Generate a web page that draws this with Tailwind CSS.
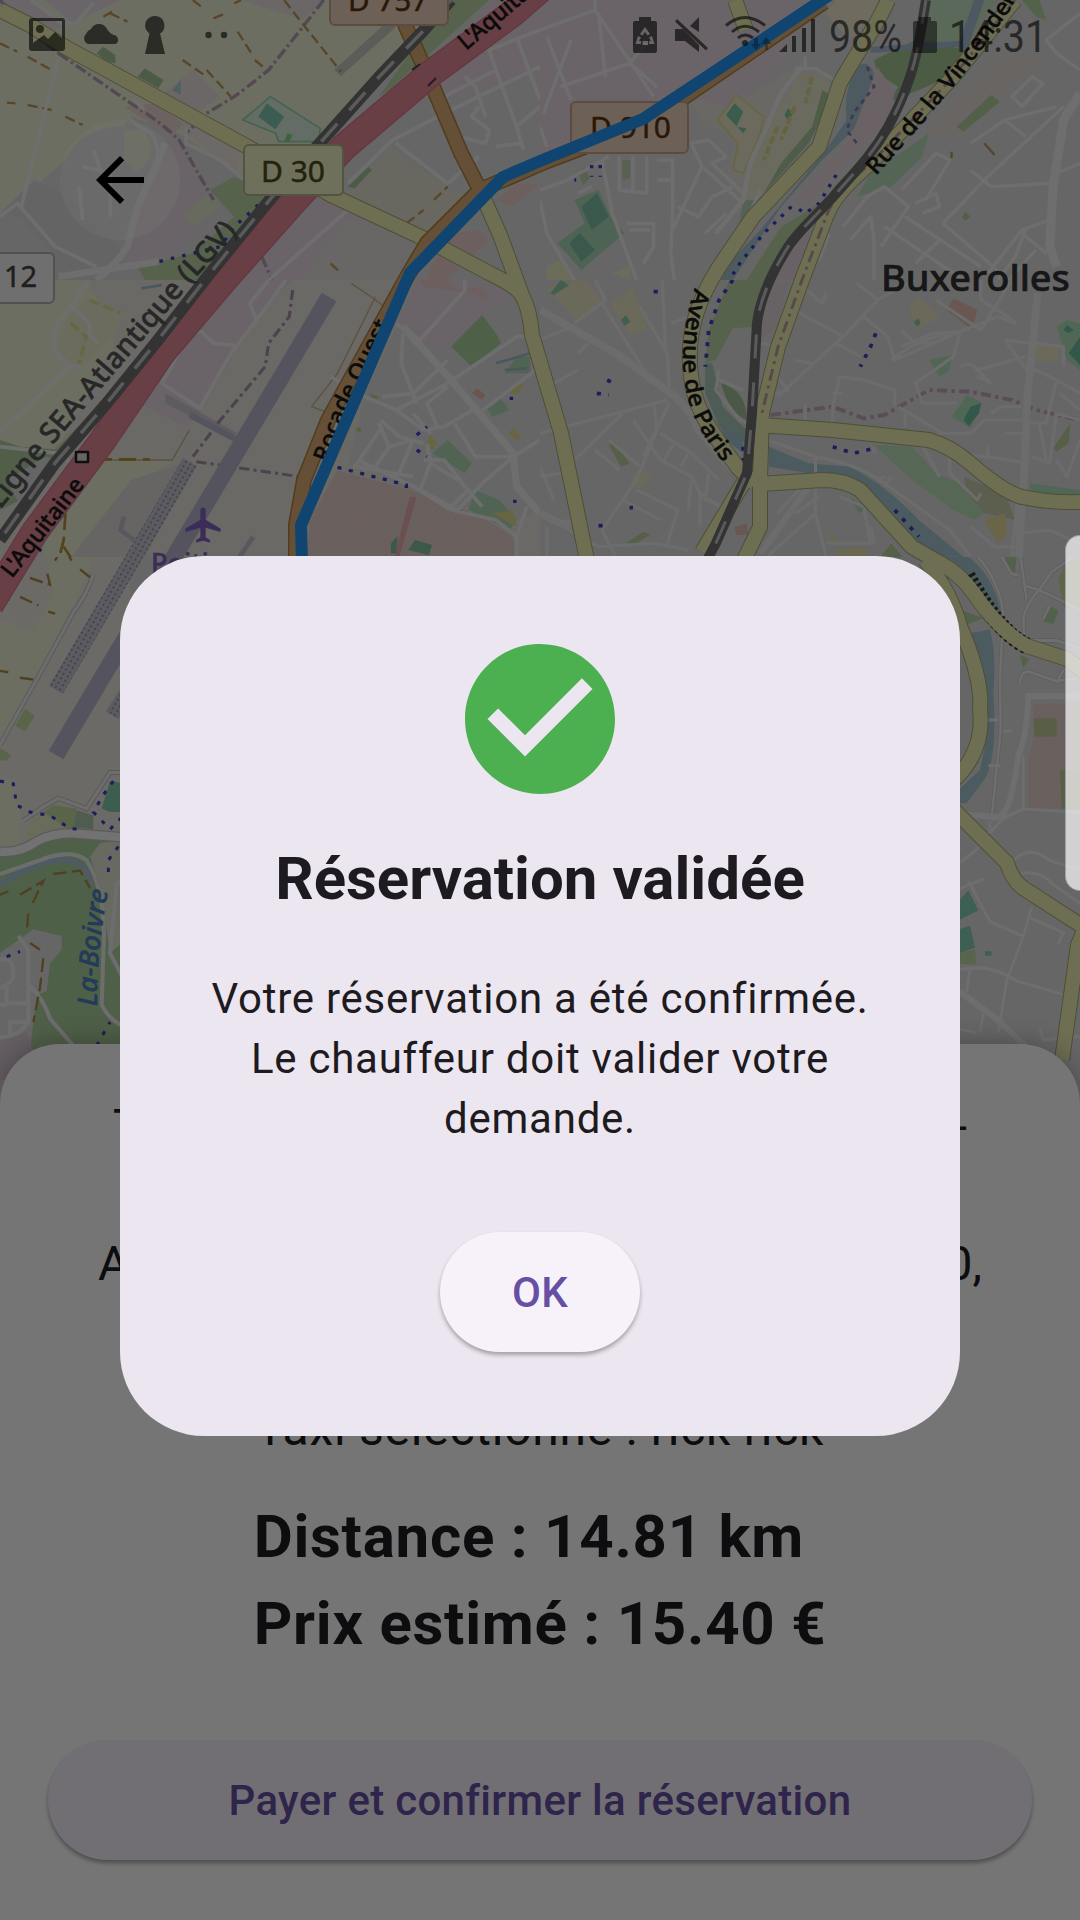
<!DOCTYPE html>
<html lang="fr">
<head>
<meta charset="utf-8">
<title>Réservation</title>
<script src="https://cdn.jsdelivr.net/npm/@tailwindcss/browser@4"></script>
</head>
<body class="bg-white font-['Roboto',sans-serif]">
<main class="relative h-[1920px] w-[1080px] overflow-hidden bg-white">

<!-- Map -->
<svg class="absolute left-0 top-0" width="1080" height="1120" viewBox="0 0 1080 1120" font-family="'Noto Sans',sans-serif">
<defs>
<pattern id="hatch" width="14" height="14" patternUnits="userSpaceOnUse" patternTransform="rotate(40)"><rect width="14" height="14" fill="#e6d3ce"/><path d="M0 0V14" stroke="#dfc0ba" stroke-width="2"/></pattern>
<pattern id="dots" width="5" height="5" patternUnits="userSpaceOnUse" patternTransform="rotate(30)"><rect width="5" height="5" fill="#c8c8d2"/><circle cx="2" cy="2" r="1.2" fill="#9494b0"/></pattern>
<path id="p-lgv" d="M0 510L57 440L192 282L247 222"/>
<path id="p-a1" d="M12 579L88 481"/>
<path id="p-a2" d="M466 51L560 -29"/>
<path id="p-roc" d="M328 463L347 410L407 290"/>
<path id="p-av" d="M695 288C681 330 680 370 688 398C694 424 710 446 728 468"/>
<path id="p-vin" d="M876 176L921 125L964 74L1010 10L1032 -33"/>
<path id="p-boi" d="M97 1006C97 970 100 930 109 888"/>
<path id="r-lgv" d="M451 0L424 30L379 77L320 143L272 197L207 277L158 340L107 403L55 463L0 540"/>
<path id="r-east" d="M926 0L921 30C915 65 908 90 888 127C872 155 855 172 833 197C810 222 798 232 788 247C772 272 760 300 757 323L752 413L747 473L716 543L706 562"/>
<path id="yellow" d="M0 10L30 25L65 47L193 117L248 147L331 195L427 240L489 273Q516 286 522 295Q530 310 532 335L561 433L587 560M480 190L500 235L522 295M735 0L746 30M888 0C875 30 858 50 840 83L819 147L753 217L719 267C698 300 688 330 690 365C692 410 712 432 738 468L755 484M1015 0L953 77L871 163C845 185 832 200 826 217L802 280L778 347L762 413L760 480V527L743 562M760 425L833 430L929 440Q950 446 970 463Q1003 492 1022 497Q1050 503 1080 502M760 484L822 480Q845 480 860 490L912 547L940 563Q960 574 973 592Q1000 632 1027 646L1067 659L1084 672M925 560Q950 590 960 626Q983 680 980 710Q985 750 954 780M944 800L1007 863Q1012 880 1023 888L1085 928L1078 945L1062 1060M702 552L744 482"/>
</defs>
<rect width="1080" height="1120" fill="#e0dfdf"/>

<!-- south-west -->
<svg x="0" y="540" width="130" height="540" viewBox="0 0 390 1568" preserveAspectRatio="none">
<rect width="390" height="1568" fill="#e9e6de"/>
<path d="M130 0H300L240 150L0 600V230L100 270L160 150Z" fill="#eef0d5"/>
<path d="M0 690L40 700L60 800L60 900H0Z" fill="#eef0d5"/><path d="M80 830L170 760L280 800L250 860L80 890Z" fill="#e4ebc4"/>
<path d="M45 540L75 490L105 510L75 555ZM0 605L35 625L20 640H0ZM160 770L230 780L220 850L190 830L130 790Z" fill="#c5dba0"/>
<path d="M230 785L280 800V840L220 835Z" fill="#aec8ae"/>
<path d="M0 910L200 860L390 880V1568H0V1200L60 1140V1000L0 980Z" fill="#add19e"/>
<path d="M0 980L60 1000V1140L0 1200Z" fill="#add19e"/>
<path d="M0 1200L100 1130L185 1150V1190L150 1230L140 1310L110 1320L100 1400L80 1568H0Z" fill="#e0dfdf"/>
<path d="M300 880L390 870V1150L330 1200L300 1000L270 920Z" fill="#e2e5d2"/>
<path d="M0 1450L80 1430L100 1480L110 1568H0Z" fill="#dccdd6"/>
<path d="M305 780L330 700L390 710V790L330 790Z" fill="#88cbb0"/>
<path d="M0 1000Q130 920 200 930Q260 935 275 1000" stroke="#aac6d8" stroke-width="16" fill="none"/>
<path d="M0 595L130 370L220 210Q260 160 280 100M70 815L130 775L175 750L260 780L330 675H390" stroke="#c4c4c4" stroke-width="15" fill="none"/>
<path d="M0 595L130 370L220 210Q260 160 280 100M70 815L130 775L175 750L260 780L330 675H390" stroke="#eee" stroke-width="9" fill="none"/>
<path d="M0 905Q60 910 110 875Q160 850 220 852L390 865" stroke="#c4c4c4" stroke-width="31" fill="none"/>
<path d="M0 905Q60 910 110 875Q160 850 220 852L390 865" stroke="#f8f8f8" stroke-width="24" fill="none"/>
<path d="M0 970L150 920Q220 900 260 930Q320 1020 310 1200L305 1350Q330 1400 390 1420M55 1150L85 1190V1400Q60 1440 0 1445M0 1220Q40 1200 40 1270Q20 1300 0 1300M20 1290V1345H85M0 1350H20M30 1440V1400H85M85 1290Q130 1330 150 1390L230 1480M390 970L350 1000L330 1200L390 1310" stroke="#eee" stroke-width="12" fill="none"/>
<path d="M0 700L40 708L50 770L90 790L150 800L210 838L240 840M340 700L310 740L280 790L330 840L380 790M355 890L325 930V970M290 1468L330 1400M20 1210L60 1195" stroke="#4040c8" stroke-width="9" stroke-dasharray="12 24" fill="none"/>
<path d="M165 60L190 20L215 60M90 110L150 130L140 90M0 175L30 172M60 165L115 190M145 208L165 214M0 380L25 384M60 400L100 405M240 85L270 108M60 1030L130 990L95 1060M0 1030L25 1020M85 1085L80 1140M90 1170L120 1190M130 1215L120 1300L100 1400M160 970L240 960L270 1010" stroke="#b08a48" stroke-width="7" stroke-dasharray="40 16" fill="none"/>
</svg>

<!-- south-east -->
<svg x="940" y="500" width="140" height="580" viewBox="0 0 420 1568" preserveAspectRatio="none">
<rect width="420" height="1568" fill="#e0dfdf"/>
<path d="M0 0H90L130 60L70 50L0 20Z" fill="#c0e4c4"/>
<path d="M130 60L200 80V110L170 125Z" fill="#e8e0a8"/><path d="M190 130L230 150L225 195L205 190ZM45 290L130 320L70 340ZM240 420L268 430L250 455ZM310 330L330 285L355 300L340 335Z" fill="#b4d3a0"/>
<path d="M0 100L80 150Q160 200 185 310L170 340L100 240L0 150ZM90 360L150 350Q170 420 160 520Q175 700 130 760L80 820H60V780L120 730L140 640V560Z" fill="#a4c6d0"/>
<path d="M280 550H420V835H265V700L280 650Z" fill="url(#hatch)"/><path d="M280 590H350V640H285ZM360 730H420V835H365Z" fill="#c3cc9c"/>
<path d="M355 210L385 160H420V290H370Z" fill="#cddd9a"/>
<path d="M60 1080L85 1055L115 1110L60 1135ZM60 1160L90 1150L105 1210L60 1225ZM135 1220H155V1232H135Z" fill="#88d0b5"/>
<path d="M60 1225L105 1215L110 1255H60Z" fill="#c0dca8"/>
<g fill="none" stroke="#c6c6c6" stroke-width="12"><path d="M0 75L90 130Q180 210 190 310L180 480L182 620L155 860M90 60L170 130L215 200L235 202M235 0L215 130M170 128H235M250 0L238 130L260 270M250 230Q330 250 420 300M240 85H330L420 125M300 240L335 195L420 140M300 240Q250 290 250 330L255 390M250 380H350L420 400M240 500Q240 460 270 465L350 490L420 480M350 495L370 460M310 320L330 285"/></g>
<g fill="none" stroke="#efefef" stroke-width="8"><path d="M0 75L90 130Q180 210 190 310L180 480L182 620L155 860M90 60L170 130L215 200L235 202M235 0L215 130M170 128H235M250 0L238 130L260 270M250 230Q330 250 420 300M240 85H330L420 125M300 240L335 195L420 140M300 240Q250 290 250 330L255 390M250 380H350L420 400M240 500Q240 460 270 465L350 490L420 480M350 495L370 460M310 320L330 285M120 595H175M145 718H180M190 625H215M250 690V835L420 845M250 835L190 860L150 900M60 980L110 945L150 895V870M60 1050L130 1025M85 1030L150 1140L250 1180M220 975Q270 930 330 975L420 1000M245 1010Q300 1000 340 1040L420 1090M275 1100L250 1180L200 1300L175 1440M270 1130L370 1170L355 1200M60 1270Q150 1250 230 1300L380 1340M90 1270L80 1330M120 1440L130 1390M60 1430L110 1440M300 1430L310 1460L420 1450"/>
<path d="M60 850L150 855Q190 870 210 810Q225 760 235 690Q260 640 265 530H420M60 1330L180 1410L260 1480" stroke-width="17"/></g>
</svg>

<!-- north-west -->
<svg x="0" y="0" width="540" height="280" viewBox="0 0 1568 840" preserveAspectRatio="none">
<rect width="1568" height="840" fill="#e0dfdf"/>
<path d="M0 0H350L640 290L920 420L800 590L520 400L330 330L170 180L80 560L0 640Z" fill="#eef0d5"/>
<path d="M330 0H960L1200 60L1310 0L930 430L700 430L540 330L170 130Z" fill="#eef0d5"/>
<path d="M170 170L390 330L360 380Q230 380 190 480L100 560L0 640V130Z" fill="#eef0d5"/>
<path d="M0 0H90L180 80L120 110L0 20ZM210 70L350 0H130Z" fill="#e6dce4"/>
<path d="M700 0H940L880 60ZM450 300L560 210L640 290L570 340Z" fill="#e9e0e0"/>
<path d="M430 330L560 340L700 430L690 520L540 400Z" fill="#ebe4de"/>
<path d="M360 320L450 310L530 370L500 410Z" fill="#ecd5cf"/>
<path d="M520 410L620 620L560 700L450 800H320L420 560Z" fill="#e8dbe4"/>
<path d="M530 640L610 580L640 620L560 680Z" fill="#e2e5d0"/>
<path d="M0 640L100 540L200 590L360 760L280 840H160L150 760L60 650Z" fill="#dadada"/>
<path d="M610 570L680 530L800 590L600 840H420L400 800L560 760L680 650Z" fill="#bcd5a4"/>
<path d="M1300 0H1420L1130 270L1100 290Z" fill="#bcd5a4"/>
<path d="M1430 0H1568V220L1290 300L1250 230Z" fill="#e8dbe4"/>
<path d="M1000 600L1130 580L1200 680L1240 720L1100 840H690L860 600Z" fill="#e8dbe4"/>
<path d="M1010 660L1200 700L1230 740L1170 840H870Z" fill="#e5e1dc"/>
<path d="M1000 580L1130 450L1290 550L1350 590L1230 700Z" fill="#e2e3d2"/>
<path d="M705 360L785 290L930 385L925 425H810L800 400Z" fill="#d8eedc" stroke="#95d8a5" stroke-width="5"/>
<path d="M750 350L775 310L825 350L800 388Z" fill="#80c8b0"/><path d="M825 425L835 400L850 405L840 425Z" fill="#7ddb8a"/>
<path d="M280 160L300 140L335 165V190L310 185ZM400 230L420 205L475 240L460 265ZM1010 560L1070 500L1080 510L1030 565Z" fill="#a6c79a"/>
<path d="M500 270L525 240V285Z" fill="#b4cfd4"/>
<path d="M1440 600L1500 550H1568L1490 620ZM1250 800L1310 700L1390 690L1420 720L1300 840H1240Z" fill="#edd0ca"/>
<path d="M360 390H420L440 440L430 480L400 520L360 480Z" fill="#e8ebcf"/>
<path d="M970 210L1130 60L1150 80L990 228Z" fill="#c8c8c0"/>
<path d="M940 0L880 80L780 210Q720 260 680 290L600 340L540 400M170 160L380 310Q460 360 520 420L620 600M0 0L60 70L170 160M760 770L790 840" stroke="#b79fb5" stroke-width="10" stroke-dasharray="34 10 8 10" fill="none"/>
<path d="M320 40L370 65M560 0L590 25M620 55L655 40M680 10L700 0M825 0L870 60L990 215M690 95L730 160M740 180L775 210M530 180L600 230M600 210L670 290M0 130L50 155M80 170L150 210M20 308L45 310M80 315L150 330M190 350L240 375M960 790L990 820M1180 670L1230 630M1260 600L1300 560M300 50L325 35" stroke="#c29a5c" stroke-width="7" stroke-dasharray="30 14" fill="none"/>
<g fill="none" stroke-linejoin="round" stroke="#efefef" stroke-width="11"><path d="M170 170L60 630M0 650L50 610L160 740L280 800M90 0L180 70H220L270 10M270 450L300 530M240 500L320 520V650M230 560L240 660M370 350Q400 380 440 400Q480 480 440 540M390 300L420 330M540 380V430L640 480L710 540M1010 630L780 840M1010 550L1140 420L1290 340L1568 200M1290 290L1440 210L1420 150L1568 90M1500 110L1568 300M1440 210L1500 380L1568 320M1150 430L1300 550L1390 470M1330 410L1410 430L1420 390L1370 350L1390 320M1350 230L1380 260L1410 350M1440 440L1510 430M1500 380L1520 450"/>
<path d="M480 430L400 620L370 740Q330 800 280 840M170 830L460 785" stroke-width="20"/></g>
<path d="M750 615L680 680L640 740L460 785" stroke="#4040c8" stroke-width="10" stroke-dasharray="10 24" fill="none"/>
</svg>

<!-- north-east -->
<svg x="540" y="0" width="540" height="280" viewBox="0 0 1568 840" preserveAspectRatio="none">
<rect width="1568" height="840" fill="#e0dfdf"/>
<path d="M0 0H770L700 190L560 320L430 300L330 300L0 470Z" fill="#e8dbe4"/>
<path d="M440 300L560 320L740 200L830 220L850 280L620 630L540 540L570 400L480 380Z" fill="#e6e2dc"/>
<path d="M760 215L840 250L790 380L640 590L590 600L620 450Z" fill="#e9e7cc"/>
<path d="M820 270L850 290L780 430L650 580L700 490L790 380Z" fill="#adc99e"/>
<path d="M515 360L570 285L650 350L640 400L590 520L560 510L575 430Z" fill="#e9e7c8" stroke="#e0dc90" stroke-width="5"/>
<path d="M540 345L565 310L590 335L570 380L600 385L590 400ZM710 345L720 325L735 340L720 362Z" fill="#80c8a8"/>
<path d="M860 0H1000L960 60L900 120L830 40Z" fill="#f2ead0"/>
<path d="M1110 0H1330L1240 130H1120Z" fill="#c4e4c4"/><path d="M970 180L1090 120L1240 150L1190 230L1010 310L1040 260L980 220Z" fill="#a4c694"/>
<path d="M1400 0H1450L1470 60L1440 50Z" fill="#b5d5a4"/>
<path d="M920 200Q960 170 975 240L960 330L890 410L820 480L700 620L560 840H500L640 690L830 450L890 360Q880 270 920 200Z" fill="#a8c4d0"/>
<path d="M1290 0L1240 150H1210L1260 0Z" fill="#a8c0d8"/><path d="M960 150L1240 130" stroke="#a8c0d8" stroke-width="18" fill="none"/>
<path d="M980 200L1030 280L1010 370L900 470L780 610L740 600L900 420Z" fill="#e6d6dc"/>
<path d="M960 520L1130 400L1110 470L1020 560L920 590Z" fill="#b8dcbc"/>
<path d="M600 840L700 680L830 600L860 590L720 740L670 840Z" fill="#bcd5a4"/><path d="M590 600H625L580 670Z" fill="#b4d6bc"/>
<path d="M670 840L740 740L820 650L840 690L760 840Z" fill="#e4d4dc"/>
<path d="M1330 160H1480L1300 320L1180 430L1120 390Z" fill="#e4dcd8"/>
<path d="M1210 380L1310 285L1335 305L1230 395ZM1225 650L1235 635L1250 650L1235 662Z" fill="#b4d0a0"/>
<path d="M100 600L170 570L210 660L245 700L120 810L50 730L130 670Z" fill="#a8d8b8"/><path d="M120 620L165 580L200 650L150 690ZM85 730L115 700L160 750L120 785Z" fill="#80c0a8"/>
<path d="M20 800L60 780L110 840H20ZM210 820L260 800V840Z" fill="#ecebc4"/><path d="M110 520L130 500L145 535L125 555ZM240 480H262V535L240 540Z" fill="#c0d4ac"/>
<g fill="none" stroke="#efefef" stroke-linejoin="round" stroke-width="10"><path d="M0 90L160 30V0M20 110L90 300M90 120L10 340M160 30L330 290M170 40L190 230M60 260L260 190L310 130M260 190L340 260M0 380L20 440M0 570L80 540L200 470M180 480L210 640L280 840M110 580L150 560M0 600L20 700L100 840M230 470V570L310 580V470M270 470V580M340 480H385V640L380 760L390 840M340 540H385M250 670H330V740L300 790M260 690H320M385 690L470 500L440 430L490 420L540 470L500 490L590 580M470 500L590 610M400 620L460 650L500 590L560 560M640 570L520 840M480 700L540 640M770 170V200M870 250L800 205H740"/>
<path d="M760 200L700 280L650 400L610 490L590 600L510 700" stroke-width="14"/>
<path d="M1568 210L1500 160L1470 120L1568 40M1370 290L1430 230L1460 250L1400 320ZM1250 430L1350 360L1410 410M1350 360L1500 320M1050 570L1150 460L1190 480L1120 600M1250 510L1310 560L1480 550M1520 320L1300 530L1170 670M1500 520L1568 490M880 680L950 590L1000 560L1070 620L990 740M900 720L960 650L970 720V840M840 700L810 780L760 790M1000 680L1230 840M1060 650L1280 800M1170 670L1350 830M1090 610L1150 580L1160 620L1110 640M1300 820L1400 690L1480 660M1410 690L1380 770L1330 840M1400 700L1470 760M1090 790L1160 720M1360 840L1440 750"/>
<path d="M1568 280L1520 360L1490 560L1480 740L1500 800" stroke-width="26"/></g>
<path d="M730 620L650 700L580 790L550 840M860 525L810 610L770 640L740 620M150 495V530M175 495V530M100 540H105" stroke="#4040c8" stroke-width="10" stroke-dasharray="10 22" fill="none"/>
<path d="M950 200L970 260L910 340L890 390L920 430" stroke="#8080b8" stroke-width="8" stroke-dasharray="14 14" fill="none"/>
<path d="M790 230L770 310M740 320L700 420M690 380L650 480" stroke="#dcd890" stroke-width="12" stroke-dasharray="24 8" fill="none"/>
<path d="M1290 430L1320 465M1195 455V475" stroke="#b59a5c" stroke-width="7"/>
</svg>

<!-- west -->
<svg x="0" y="280" width="540" height="277" viewBox="0 0 1568 831" preserveAspectRatio="none">
<rect width="1568" height="840" fill="#e8e4dc"/>
<path d="M0 60L160 0H250L300 90L330 200L180 480L0 640Z" fill="#eef0d5"/>
<path d="M200 540H490L330 700L240 840H120Z" fill="#eef0d5"/><path d="M380 600L200 840H420L560 540Z" fill="#e0ddda"/>
<path d="M200 100L250 60L360 100L330 170L240 260L160 220Z" fill="#ecebcc"/>
<path d="M590 0H640L190 520H150L330 330L520 90Z" fill="#bcd5a4"/>
<path d="M0 480L60 500L190 510L100 640L0 690Z" fill="#b0cfa0"/><path d="M20 600L130 530L180 540L60 680Z" fill="#ddd"/>
<path d="M690 0H850L780 70L690 200L590 380L540 440L400 370L500 190Z" fill="#e6d9e2"/>
<path d="M480 340L690 460L670 475L480 370Z" fill="#cbc9d4"/>
<path d="M1215 0H1568V700L1500 720L1180 640L1050 540L1010 560L1060 340Z" fill="#e0dfdf"/>
<path d="M1210 0H1370L1490 40L1280 210L1150 130Z" fill="#e6d9e2"/><path d="M1220 0H1300L1330 30L1400 20L1420 60L1370 40L1230 20Z" fill="#ecd0ca"/>
<path d="M1310 200L1400 105L1440 160L1455 190L1370 260Z" fill="#add19e"/>
<path d="M980 570L900 720L890 840H1500L1490 770L1380 700L1190 630Z" fill="url(#hatch)"/>
<path d="M1190 650H1210L1160 830H1145Z" fill="#e8b0ac"/>
<path d="M1185 810L1205 780L1255 795L1245 825ZM1135 790L1155 768L1150 820H1135Z" fill="#80c0a0"/>
<path d="M1255 520L1300 480L1370 550L1350 580ZM1410 380L1450 350L1480 390L1430 410ZM1380 630L1450 660L1500 720L1480 750L1360 690ZM1500 230H1540V280H1465Z" fill="#b0d8b4"/>
<path d="M1235 490L1250 465L1270 490L1255 510ZM1480 340L1510 305L1520 320L1500 345ZM1475 460L1490 445L1515 475L1500 480ZM1430 700L1490 690L1500 740Z" fill="#e2dc90"/>
<path d="M1070 340L1100 350L1090 365ZM1030 450L1045 440L1050 460Z" fill="#b8d890"/><path d="M1370 340L1385 325L1410 345L1400 360Z" fill="#ecb8b0"/>
<path d="M850 30L840 110L780 190L770 260L640 420L560 530M570 545L870 590" stroke="#a98fa8" stroke-width="9" stroke-dasharray="30 12 9 12" fill="none"/>
<path d="M1090 50L980 280L905 380L960 400M550 450L500 540H270M1020 10L1070 45L1130 90" stroke="#c9b183" stroke-width="4" fill="none"/>
<path d="M275 538H435M205 640V670M190 700L185 780L170 840M185 800L210 840" stroke="#b5913c" stroke-width="8" stroke-dasharray="50 20" fill="none"/>
<g fill="none" stroke="#efefef" stroke-linejoin="round" stroke-width="11"><path d="M0 460L200 260L160 210Q150 160 170 130L260 0M200 80Q270 120 260 160L285 190M200 260L230 260M0 500L170 520L220 560M780 0L725 70L745 120L830 0M745 120L670 220L580 385L470 310L550 160L585 155L620 190L680 195M960 290L1060 350L1150 390L1300 310L1500 170H1568M1150 130L1220 180L1350 30V0M1170 160L1165 250L1210 370M1110 350L1200 340L1300 240M1150 390L1230 450L1290 440L1390 380M1105 420L1160 470L1230 490M1110 440L1030 560L1200 590M1100 430L1130 500L1090 560M1130 500L1200 480L1150 600M1240 490L1250 550L1220 630L1330 690L1400 610L1490 530L1568 480M1250 550L1330 600M1270 440L1240 370L1300 320M1320 430L1380 530H1490M1230 540H1290L1350 620L1400 680M1390 400L1568 260M1200 400L1250 460M1310 680L1360 630M1040 540L1200 620L1310 690L1440 720L1500 770V840M1500 770L1530 680"/>
<path d="M1170 140L1310 300L1490 520L1500 620L1568 700" stroke-width="21"/></g>
<path d="M980 562L1180 615V630M1480 355H1490M1210 465L1240 440M1210 510L1240 530M1490 664H1500" stroke="#4040c8" stroke-width="10" stroke-dasharray="12 22" fill="none"/>
<path d="M1440 250L1540 220M1465 270L1530 265M410 25L470 15" stroke="#a0c0cc" stroke-width="8"/>
<path d="M205 130L250 170L230 250M260 60L350 100" stroke="#e2dc90" stroke-width="10" stroke-dasharray="30 14" fill="none"/>
<path d="M360 710L350 750L390 780M735 770L690 840" stroke="#c0c0cc" stroke-width="14" fill="none"/>
</svg>

<!-- east -->
<svg x="540" y="280" width="540" height="277" viewBox="0 0 1568 831" preserveAspectRatio="none">
<rect width="1568" height="840" fill="#e0dfdf"/>
<path d="M20 20L130 0L185 70L115 130ZM205 70L270 20L310 150L260 165ZM1070 80L1100 50L1160 110L1095 150ZM265 600L290 560L325 590L295 630ZM1440 190L1505 205L1500 245H1440Z" fill="#e7e4c4"/>
<path d="M30 40L60 0L85 15L40 45ZM235 120L250 105L262 125L245 138ZM1085 125L1100 115L1105 130L1095 140Z" fill="#90d0a8"/>
<path d="M550 0H665L625 140L560 145L510 240L480 250L490 150Z" fill="#bcd5a4"/>
<path d="M665 30L720 0L690 140L640 180Z" fill="#e4d6dc"/>
<path d="M480 250L500 250L530 380L600 450V490L520 440L480 340Z" fill="#a8c8b8"/><path d="M525 310Q600 330 600 420Q550 400 525 310Z" fill="#a4c098"/>
<path d="M520 430L590 470V520L540 480ZM665 500L780 550L900 560Q1000 610 1100 720L1230 830H1150L1040 750L930 610L780 580L665 560Z" fill="#a4c6d0"/>
<path d="M970 495L1080 500L1150 580L1220 610L1300 690L1260 720L1200 690L1080 600Z" fill="#bce0bc"/>
<path d="M1230 590L1350 640L1380 720L1290 700L1240 640Z" fill="#c8d0ac"/><path d="M1290 720L1350 700L1355 760L1330 790Z" fill="#e6dc98"/>
<path d="M1180 90L1200 55L1270 90L1255 150Z" fill="#e8bcb6"/><path d="M565 740L600 730L605 765H570Z" fill="#e8bcb6"/>
<path d="M1130 240L1200 225L1185 275L1160 290ZM1195 410L1240 345L1285 370L1250 445ZM1500 140L1530 120L1568 130V270L1530 240ZM900 650L950 690L925 700ZM1420 610L1568 630V645H1430Z" fill="#b0e0bc"/>
<path d="M1230 420L1250 380L1280 370L1275 400L1245 438ZM1535 220L1568 170V255ZM1520 150L1530 135L1550 150L1535 160Z" fill="#70c0a0"/>
<path d="M200 495L215 485L260 550L235 560ZM1490 505L1540 430L1535 490L1500 515ZM250 790L300 755L320 765L270 795ZM980 840L1020 790L1060 840Z" fill="#bccf9c"/>
<path d="M840 770L855 760L860 790H845ZM860 810L950 800V840H860Z" fill="#e8e2b0"/>
<path d="M670 405L850 380L940 415L1000 405L1130 330L1250 335L1370 360L1440 390L1568 420" stroke="#c4a8be" stroke-width="12" stroke-dasharray="30 12 10 12" fill="none"/>
<g fill="none" stroke="#ececec" stroke-linejoin="round" stroke-width="9"><path d="M100 130L190 60L160 0M180 70L320 300M0 180L80 145M110 220L140 190M290 80L370 220L375 330M355 0L365 220M380 130L430 110M0 460L370 360M40 310L110 270M270 420L350 540L440 590L465 640L520 680M240 400L100 540M330 370L340 450L280 600L180 750L220 830M200 480L290 560M160 510L230 570M350 460L440 520L520 600M375 370L300 530M390 490L360 540M430 520L410 560M0 560L40 660M70 740L170 800L330 790L430 810M280 630L400 690L370 790M240 660L350 720M440 600L430 690M465 640V740M490 580L480 660L540 680M0 590L60 580M20 740V830M520 270L510 330L580 420L620 440M520 300L590 330M640 190L700 200M720 80L880 170L980 60L920 10M880 170L690 350M860 190L930 230M680 280L720 330L680 340M740 240L790 250M740 0L820 70L830 40M980 60L1090 0M1150 60L1280 150L1370 0M940 110L1010 170L1030 240L1220 155L1140 160L1050 200M1020 240Q1080 190 1150 170L1220 155L1200 230L1090 310L1110 370H1210M1050 150L1090 190H1140M1220 260Q1250 240 1270 270L1410 230M1270 270L1310 310L1270 290M1220 155L1330 110L1380 130L1360 110L1280 60V0M1350 180L1430 190M1350 180L1420 280M1030 380L1030 330L940 300L870 290L850 380V430M850 340H880M1040 380L1170 460L1250 460L1290 420H1400M1060 400V440M1170 460L1100 480L1160 590M1190 510V580L1270 660L1280 640M1310 400L1340 380L1400 380M1350 460H1400M1190 520L1300 530L1420 550M1300 500V530M1440 190L1520 200V260M1420 260L1500 300L1568 340M1500 300L1470 430L1420 430M1500 400L1480 550L1430 530M1450 430L1470 540M1510 340L1568 390M1500 400L1568 420M1568 480L1530 590L1500 540M970 500V520M770 370V420"/>
<path d="M660 480L800 530Q920 550 1000 610L1190 750L1250 830M800 530V700L660 830M800 700L830 830M960 790L940 680L870 650M740 700L810 650M980 600L1000 590M690 700L760 620M1000 620L1020 590M830 790H970L960 740M1250 740L1320 800H1400M1385 670L1370 830M1390 760L1480 750L1568 790" stroke-width="9"/>
<path d="M0 90L220 220L380 340Q440 390 460 450L560 570M1445 40L1430 200L1415 350L1405 600L1395 740L1390 830M0 700L60 730H110" stroke-width="22"/><path d="M780 620L640 820" stroke-width="18"/></g>
<path d="M560 0L520 60L490 150L480 260M975 160L960 200L930 260M850 500L910 520L970 505M1030 690L1100 770M330 35H360M195 300L215 310M165 340L200 345M260 683H270M170 737H182M590 500V560" stroke="#4040c8" stroke-width="11" stroke-dasharray="12 22" fill="none"/>
</svg>

<!-- airfield -->
<g fill="none"><path d="M329 297L56 755" stroke="#b9b8cc" stroke-width="17"/><path d="M190 462L56 690" stroke="url(#dots)" stroke-width="16"/><path d="M190 415L237 440" stroke="#b9b8cc" stroke-width="6"/><path d="M128 690L112 715" stroke="url(#dots)" stroke-width="14"/></g>

<!-- main roads -->
<g fill="none" stroke-linejoin="round">
<use href="#yellow" stroke="#a8a978" stroke-width="16"/><use href="#yellow" stroke="#eff1b4" stroke-width="14"/>
<path d="M1015 0L953 77L871 163C845 185 832 200 826 217L802 280L778 347L762 413" stroke="#c0a0a0" stroke-width="3" stroke-dasharray="12 5 3 5"/>
<path d="M967 576Q1000 634 1027 646" stroke="#333" stroke-width="17" stroke-dasharray="3 3"/><path d="M940 563Q960 574 973 592Q1000 632 1029 647" stroke="#eff1b4" stroke-width="14"/>
<path d="M398 0L406 27L430 80L461 153L480 190L427 243L408 275L328 420L304 480L296 525V560M480 190L545 162L645 124L824 2" stroke="#b0843c" stroke-width="16"/>
<path d="M398 0L406 27L430 80L461 153L480 190L427 243L408 275L328 420L304 480L296 525V560M480 190L545 162L645 124L824 2" stroke="#dcae78" stroke-width="13"/>
<path d="M545 -15L513 13L430 74L344 147L295 200L224 280L162 353L103 440L34 533L-10 605" stroke="#d87a8e" stroke-width="28"/>
<path d="M545 -15L513 13L430 74L344 147L295 200L224 280L162 353L103 440L34 533L-10 605" stroke="#e5899a" stroke-width="25"/>
<path d="M412 70L420 64M428 86L436 78" stroke="#444" stroke-width="2"/>
<use href="#r-lgv" stroke="#707070" stroke-width="12"/><use href="#r-lgv" stroke="#c4c4c4" stroke-width="3.5" stroke-dasharray="24 18"/>
<use href="#r-east" stroke="#707070" stroke-width="10"/><use href="#r-east" stroke="#c4c4c4" stroke-width="3" stroke-dasharray="24 24"/>
<path d="M76 452H88V462H76Z" stroke="#222" stroke-width="2.500" fill="#ddd"/>
</g>

<!-- map labels -->
<g fill="#1a1a1a" font-weight="500">
<text font-size="29" fill="#555" stroke="#555" stroke-width=".5"><textPath href="#p-lgv" textLength="366" lengthAdjust="spacingAndGlyphs">Ligne SEA-Atlantique (LGV)</textPath></text>
<text font-size="23" stroke="#1a1a1a" stroke-width=".5"><textPath href="#p-a1" textLength="119" lengthAdjust="spacingAndGlyphs">L'Aquitaine</textPath></text>
<text font-size="23" stroke="#1a1a1a" stroke-width=".5"><textPath href="#p-a2" textLength="119" lengthAdjust="spacingAndGlyphs">L'Aquitaine</textPath></text>
<text font-size="23" stroke="#1a1a1a" stroke-width=".5"><textPath href="#p-roc" textLength="152" lengthAdjust="spacingAndGlyphs">Rocade Ouest</textPath></text>
<text font-size="23" stroke="#1a1a1a" stroke-width=".5"><textPath href="#p-av" textLength="186" lengthAdjust="spacingAndGlyphs">Avenue de Paris</textPath></text>
<text font-size="23" stroke="#1a1a1a" stroke-width=".5"><textPath href="#p-vin" textLength="248" lengthAdjust="spacingAndGlyphs">Rue de la Vincenderie</textPath></text>
<text font-size="27" font-style="italic" fill="#4a80c0" stroke="#4a80c0" stroke-width=".5"><textPath href="#p-boi" textLength="116" lengthAdjust="spacingAndGlyphs">La-Boivre</textPath></text>
<text x="881" y="291" font-size="36" fill="#333" stroke="#333" stroke-width=".6" textLength="189" lengthAdjust="spacingAndGlyphs">Buxerolles</text>
<text x="151" y="573" font-size="27" fill="#8461c4" stroke="#8461c4" stroke-width=".5">Poitiers</text>
</g>
<path transform="translate(182 504) scale(1.75)" fill="#8461c4" d="M22 16v-2l-8.500-5V3.500c0-.83-.67-1.500-1.500-1.500s-1.500.67-1.500 1.500V9L2 14v2l8.500-2.500V19L8 20.500V22l4-1 4 1v-1.500L13.500 19v-5.500L22 16z"/>

<!-- road shields -->
<g font-size="29" stroke-width=".5">
<rect x="244" y="145" width="99" height="50" rx="5" fill="#f2f3c8" stroke="#b2b58c" stroke-width="2"/><text x="261" y="182" fill="#4c4d1c" stroke="#4c4d1c" textLength="64" lengthAdjust="spacingAndGlyphs">D 30</text>
<rect x="330" y="-26" width="118" height="51" rx="5" fill="#ecd2be" stroke="#c9a488" stroke-width="2"/><text x="348" y="11" fill="#5c3410" stroke="#5c3410" textLength="80" lengthAdjust="spacingAndGlyphs">D 757</text>
<rect x="571" y="102" width="117" height="51" rx="5" fill="#ecd2be" stroke="#c9a488" stroke-width="2"/><text x="590" y="138" fill="#5c3410" stroke="#5c3410" textLength="81" lengthAdjust="spacingAndGlyphs">D 910</text>
<rect x="-20" y="253" width="74" height="50" rx="5" fill="#f2f2f2" stroke="#b0b0b0" stroke-width="2"/><text x="4" y="287" fill="#444" stroke="#444">12</text>
</g>

<!-- route -->
<path d="M840 -12L747 50L643 119L540 161L503 177L410 273L301 525L303 600" fill="none" stroke="#2196f3" stroke-width="12" stroke-linejoin="round"/>
</svg>

<!-- Back button -->
<div class="absolute left-[60px] top-[120px] flex size-[120px] items-center justify-center rounded-full bg-white/30">
<svg class="size-[72px]" viewBox="0 0 24 24"><path d="M20 11H7.830l5.590-5.590L12 4l-8 8 8 8 1.410-1.410L7.830 13H20v-2z"/></svg>
</div>

<!-- Trip sheet -->
<section class="absolute inset-x-0 bottom-0 top-[1044px] flex flex-col rounded-t-[60px] bg-white px-[48px] pb-[60px] pt-[49px] text-[#1d1b20] shadow-[0_0_30px_rgba(0,0,0,0.3)]">
<div class="flex justify-between pl-[65px] pr-[65px] text-[48px] leading-[68px]"><span>T</span><span>-</span></div>
<div class="mt-[69px] flex justify-between pl-[50px] pr-[50px] text-[48px] leading-[68px]"><span>A</span><span>0,</span></div>
<p class="mt-[97px] text-center text-[48px] leading-[68px] tracking-[0.75px]">Taxi sélectionné : rick rick</p>
<div class="mt-[30px] self-center text-[60px] font-bold leading-[87px] tracking-[0.75px]"><p>Distance : 14.81 km</p><p>Prix estimé : 15.40 €</p></div>
<button class="mt-auto h-[120px] w-full rounded-full bg-[#f7f2fa] text-[42px] font-medium tracking-[0.3px] text-[#6750a4] shadow-[0_3px_4px_rgba(0,0,0,0.35)]">Payer et confirmer la réservation</button>
</section>

<!-- Scrim -->
<div class="absolute inset-0 bg-black/54"></div>

<!-- Status bar -->
<svg class="absolute left-0 top-0 opacity-60" width="1080" height="72" viewBox="0 0 1080 72" font-family="Roboto,sans-serif">
<path fill-rule="evenodd" d="M32 18H62Q65 18 65 21V48Q65 51 62 51H32Q29 51 29 48V21Q29 18 32 18ZM33 21V43L44 35L48 39L55 32L62 38V21ZM40 25a4 4 0 1 1 0 8a4 4 0 1 1 0-8Z"/>
<path d="M88 44A6 6 0 0 1 86 34A9 9 0 0 1 91 29A9 9 0 0 1 107 29Q110 34 114 35A5 5 0 0 1 116 44Z"/>
<path d="M155 16a9.500 9.500 0 0 1 5 17.500L165 54H145L149.500 33.500A9.500 9.500 0 0 1 155 16Z"/>
<circle cx="208.500" cy="35" r="3.200"/><circle cx="224" cy="35" r="3.200"/>
<path fill-rule="evenodd" d="M639 17H651V21H655Q657 21 657 23V51Q657 53 655 53H635Q633 53 633 51V23Q633 21 635 21H639ZM645 27L640 34L642.500 35.500L645 32L647.500 35.500L650 34ZM638 36L635.500 44H641V41H639L641 37.500ZM652 36L649 37.500L651 41H649V44H654.500ZM642.500 41V45H648V41Z"/>
<path d="M675 29H683L699 45V52L685 41H675ZM699 17V32L690 26ZM677 19L708 48L706 50.500L675 21.500Z"/>
<g fill="none" stroke="#000" stroke-width="3"><path d="M726 25.500Q745 9.500 765 25.500M732 32Q745 20.500 759 32M738 38Q745 32 753 38"/></g><circle cx="745" cy="43" r="3"/>
<path d="M751 44L756 50L761 44H758V38H754V44ZM761 44L766 37L772 44H768V50H765V44Z" opacity=".5"/><path d="M779 52L787 44V52ZM792 36H796V52H792ZM802 28H806V52H802ZM811 19H815V52H811Z"/>
<text x="829" y="52" font-size="45" textLength="73" lengthAdjust="spacingAndGlyphs">98%</text>
<path d="M919 17H931V21H935Q937 21 937 23V51Q937 53 935 53H915Q913 53 913 51V23Q913 21 915 21H919Z" opacity=".8"/>
<text x="949" y="52" font-size="45" textLength="98" lengthAdjust="spacingAndGlyphs">14:31</text>
</svg>

<!-- Edge handle -->
<div class="absolute right-0 top-[535px] h-[356px] w-[15px] rounded-l-[15px] border border-r-0 border-gray-400 bg-white/70"></div>

<!-- Dialog -->
<div class="absolute left-[120px] top-[556px] flex h-[879.5px] w-[840px] flex-col items-center rounded-[84px] bg-[#ece6f0] pt-[73px] text-[#1d1b20]">
<svg class="size-[180px] text-[#4caf50]" viewBox="0 0 24 24" fill="currentColor"><path d="M12 2C6.480 2 2 6.480 2 12s4.480 10 10 10 10-4.480 10-10S17.520 2 12 2zm-2 15l-5-5 1.410-1.410L10 14.170l7.590-7.590L19 8l-9 9z"/></svg>
<h1 class="mt-[30px] text-[60px] font-bold leading-[80px]">Réservation validée</h1>
<p class="mt-[50px] text-center text-[42px] leading-[60px] tracking-[0.75px]">Votre réservation a été confirmée.<br>Le chauffeur doit valider votre<br>demande.</p>
<button class="mt-[83px] h-[120px] w-[200px] rounded-full bg-[#f7f2fa] text-[42px] font-medium tracking-[0.3px] text-[#6750a4] shadow-[0_3px_4px_rgba(0,0,0,0.3)]">OK</button>
</div>
</main>
</body>
</html>
